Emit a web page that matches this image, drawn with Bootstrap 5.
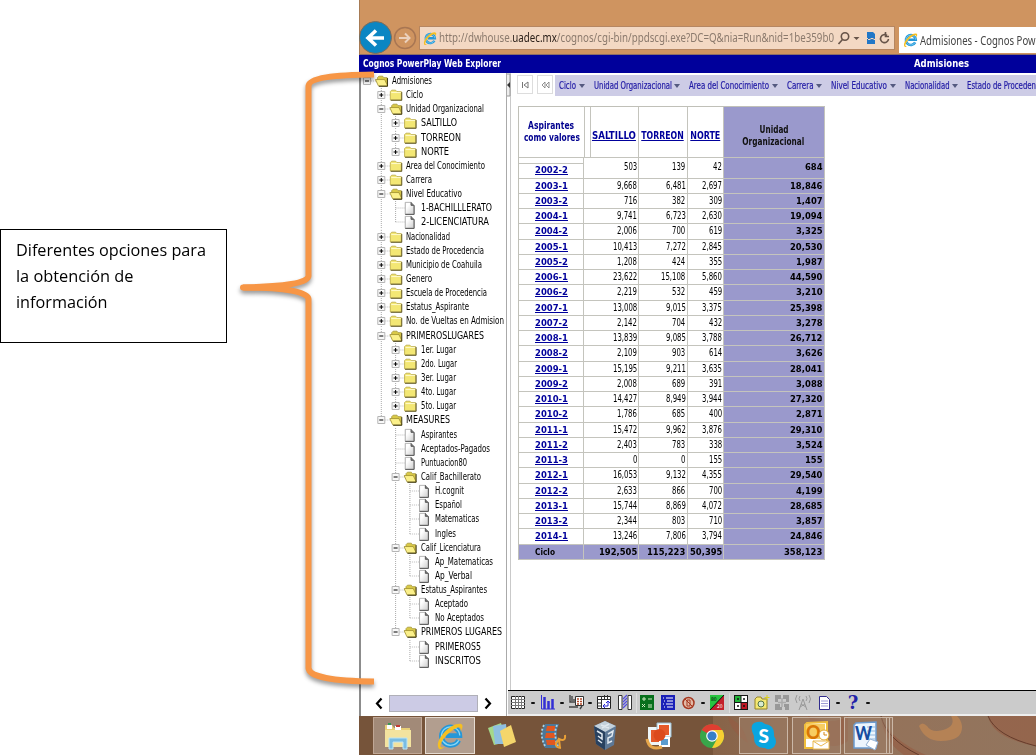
<!DOCTYPE html>
<html lang="es">
<head>
<meta charset="utf-8">
<title>Admisiones - Cognos PowerPlay Web Explorer</title>
<link href="https://cdn.jsdelivr.net/npm/bootstrap@5.3.0/dist/css/bootstrap.min.css" rel="stylesheet">
<style>
body{width:1036px;height:755px;overflow:hidden;background:#fff;font-family:"DejaVu Sans Condensed","DejaVu Sans",sans-serif;font-size:10px;line-height:14px;color:#111}
svg{display:block;overflow:visible}
.fit{display:inline-block;white-space:nowrap;transform-origin:0 50%;flex:none}
.notes{width:359px}
.callout-box{width:227px;height:114px;margin-top:229px;border:1px solid #000;padding:7px 0 0 15px;font:16px/26px "Open Sans","Noto Sans",sans-serif;color:#000}
.brace{left:235px;top:64px;pointer-events:none;z-index:5}
.win{width:677px;height:755px}
.chrome{height:55px;background:#cf9460;border-bottom:1px solid #8a6d68;font-family:"Noto Sans",sans-serif}
.addr{width:476px;height:24px;margin:26px 0 0 2px;background:#f3d8c3;border:1px solid #b68661;padding-left:3px;color:#8b7a6d;font-size:12px;line-height:22px}
.addr b{font-weight:400;color:#2b201a}
.urlclip{width:395px}
.tabx{width:137px;height:26px;margin:27px 0 0 4px;background:#fff;padding-left:4px;font-size:12px;line-height:27px;color:#444}
.brand{height:18px;background:#00009b;color:#fff;font-weight:700;font-size:10px;line-height:17px}
.side{width:149px;border-left:2px solid #8c8c8c;border-right:1px solid #aaa}
.tree{padding:1px 0 0 0;height:617px}
.trow{height:14.15px;line-height:14px;font-size:10px;color:#000}
.hscroll{height:27px}
.thumb{width:89px;height:17px;background:#cccbe5;border:1px solid #b0b0b8}
.split{width:4px;border-right:1px solid #c9c9c9}
.main{width:525px}
.dims{height:22px;margin-top:2px}
.nb{width:16px;height:19px;border:1px solid #ddd;color:#777}
.dimbar{height:21px;background:#cdcce6;color:#211ba5;font-size:10px;line-height:20px;margin-left:2px;padding-left:4px;-webkit-text-stroke:.2px #211ba5}
.dim::after{content:"";border:3px solid transparent;border-top:4px solid #555a80;border-bottom:0;margin:0 9.2px 0 2.5px}
.pivot{width:307px;margin:8.500px 0 0 6.500px;border-top:1px solid #c0c0b8;border-left:1px solid #c0c0b8}
.prow{display:grid;grid-template-columns:65px 55.5px 48.5px 36.5px 100.5px;height:15.25px}
.prow>div{border-right:1px solid #c4c4bd;border-bottom:1px solid #c4c4bd;display:flex;justify-content:flex-end;align-items:center;padding-right:1px;line-height:12px;overflow:hidden;font-size:10px;color:#000}
.prow>div:first-child{justify-content:center;padding:0 0 0 1px;font-family:"DejaVu Sans",sans-serif;font-weight:700;font-size:9.4px}
.prow>div:last-child,.prow.sum>div{background:#9a99cc;font-family:"DejaVu Sans",sans-serif;font-weight:700;font-size:9.4px}
.prow.hd{height:51px}
.prow.hd>div{justify-content:center;padding-top:8px;flex-direction:column;font-weight:700;font-size:9.6px;line-height:11.5px;color:#00008f;padding-right:0}
.prow.hd>div:first-child{padding-top:0;border-right:0}
.prow.hd>div:last-child{color:#111}
.prow.first{height:21px}
.prow.first>div{padding-bottom:1px}
.prow.first>div:first-child{padding-top:5px;padding-bottom:0;background:linear-gradient(#fff 5px,#c4c4bd 5px,#c4c4bd 6px,#fff 6px)}
.gapcell{border-left:1px solid #c4c4bd!important;box-shadow:inset 5px 0 #fff,inset 6px 0 #c4c4bd;padding-left:5px}
.lk{color:#00009b;text-decoration:underline}
.tools{height:26px;margin-left:-3px;width:529px;background:#cbcbcb;border-top:1px solid #000;border-bottom:2px solid #eee;display:grid;grid-template-columns:18px 11px 19px 10px 19px 7px 22px 20px 2px 20px 22px 19px 9px 20px 4px 20px 22px 18px 24px 18px 9px 22px 7px;padding-left:1px;align-items:center;justify-items:center}
.dd{width:4px;height:2px;background:#111;border-radius:1px}
.vs{width:1px;height:20px;background:#b2b2b2;border-right:1px solid #ddd}
.taskbar{height:39px;position:relative;background:#76543a;display:grid;grid-template-columns:49px 3px 50px 53px 51px 53px 54px 51px 2px 49px 4px 49px 3px 43px 3px 3px;padding-left:14px;align-items:center;justify-items:center}
.taskbar>*{position:relative}
.tk{width:100%;height:37px;border:1px solid #c0a795;background:#a28a78;display:flex;align-items:center;justify-content:center}
.tk.act{background:#b29e8f;border-color:#e6dcd2}
.tk.dim2{background:#9d806980;border-color:#cbb8a8}
.wall{position:absolute!important;left:354px;top:0}
.q{font:bold 18px/18px "DejaVu Serif",serif;color:#2222a8}
</style>
</head>
<body>
<svg width="0" height="0" class="position-absolute"><defs>
<symbol id="ie" viewBox="0 0 32 32"><path d="M26 21a10.500 10.500 0 1 1 1.200-5.500H11" fill="none" stroke="#2597d8" stroke-width="5.500"/><path d="M26 21a10.500 10.500 0 1 1 1.200-5.500" fill="none" stroke="#8ad7f5" stroke-width="1.500"/><path d="M3 30C-2 22 15 1 28 2c4 1 2 6 0 9 1-5-1-6-5-4C14 11 6 21 5 27c0 2 2 3 5 1-3 3-6 4-7 2z" fill="#f5bf22"/></symbol>
<linearGradient id="pg" x2="1" y2="1"><stop offset=".3" stop-color="#fff"/><stop offset="1" stop-color="#ccc"/></linearGradient>
<symbol id="fc" viewBox="0 0 14 12"><path d="M1 11V2.500L2.500 1h4L8 2.500h4.500V11z" fill="#f3e774" stroke="#b3a33c" stroke-width=".8"/><path d="M2 3.500h10" stroke="#fffbd0"/><path d="M13 3V11.500H1.500" stroke="#4f4610" fill="none" stroke-width=".9"/></symbol>
<symbol id="fo" viewBox="0 0 14 12"><path d="M2.500 8V2.500L4 1h4l1 1.500h3.500V11" fill="#d9c947" stroke="#a39436" stroke-width=".8"/><path d="M.5 4.500h9.500l3 6.500H3.500z" fill="#fbf08a" stroke="#9b8b2b" stroke-width=".8"/><path d="M13 3v8.500H4" stroke="#3b340a" fill="none"/></symbol>
<symbol id="dc" viewBox="0 0 12 14"><path d="M1.500.8h6L10.500 4v9.200h-9z" fill="url(#pg)" stroke="#aaa"/><path d="M7.500.8V4h3" fill="#777" stroke="#555"/><path d="M10.700 4v9.400H1.500" stroke="#555" fill="none"/></symbol>
</defs></svg>

<div class="d-flex position-relative">
  <aside class="notes">
    <div class="callout-box"><div><span class="fit" data-w="190">Diferentes opciones para</span></div><div><span class="fit" data-w="117.500">la obtención de</span></div><div><span class="fit" data-w="91.500">información</span></div></div>
  </aside>
  <svg class="brace position-absolute" width="145" height="630" fill="none" stroke="#f79646" stroke-width="6" style="filter:drop-shadow(0 3px 2px #0006)"><path d="M139 10.500C98 11 74 14 73.500 22V212C73 219 50 222.500 8 223.500 M8 223.500C50 223.500 73 228 73.500 235V604C74 613 98 617 139 617.500"/><path d="M8 223.500H50" stroke-linecap="round"/></svg>

  <div class="win d-flex flex-column">
    <header class="chrome d-flex">
      <svg width="58" height="54"><rect width="1" height="55" fill="#a77b55"/><circle cx="16.500" cy="37.500" r="16" fill="#0b86c3" stroke="#7d6b59"/><path d="M25 38H9.500m7.500-7.500L9 38l8 7.500" fill="none" stroke="#fff" stroke-width="3.600"/><circle cx="46" cy="38" r="10.500" fill="none" stroke="#a87653" stroke-width="1.500"/><path d="M40 38h10m-4-4.500 4.500 4.500-4.500 4.500" fill="none" stroke="#ebd1bd" stroke-width="2"/></svg>
      <div class="addr d-flex align-items-center"><svg width="14" height="15" style="margin-right:2px"><use href="#ie"/></svg><div class="urlclip overflow-hidden"><span class="fit" data-w="395">http://dwhouse.<b>uadec.mx</b>/cognos/cgi-bin/ppdscgi.exe?DC=Q&amp;nia=Run&amp;nid=1be359b0</span></div>
        <svg width="54" height="20" fill="none" stroke="#675449" stroke-width="1.600"><circle cx="11" cy="8.500" r="3.700"/><path d="M8.500 11.500 4.500 16"/><path d="M19.500 9h6l-3 3z" fill="#675449" stroke="none"/><path d="M33 4h6l2 2v4h-8zm0 8h8v4h-8z" fill="#2277c7" stroke="none"/><path d="M33 12l2-2 3 2 3-2" stroke="#1767b5" stroke-width="1"/><path d="M53 7.500A4 4 0 1 0 54.500 11M51.500 4v4.500H55"/></svg></div>
      <div class="tabx d-flex align-items-center overflow-hidden"><svg width="15" height="16" style="margin-right:2px"><use href="#ie"/></svg><span class="fit" data-w="115.500">Admisiones - Cognos Pow</span></div>
    </header>
    <div class="brand d-flex"><span style="width:555px;padding-left:4px"><span class="fit" data-w="138">Cognos PowerPlay Web Explorer</span></span><span class="fit" data-w="55">Admisiones</span></div>

    <div class="d-flex" style="height:643px">
      <div class="side"><div class="tree overflow-hidden" id="tree"></div>
        <div class="hscroll d-flex align-items-center"><svg width="28" height="17"><path d="M20.500 3.500 16 8.500l4.500 5" fill="none" stroke="#000" stroke-width="2.200"/></svg><div class="thumb"></div><svg width="20" height="17"><path d="M7.500 3.500 12 8.500l-4.500 5" fill="none" stroke="#000" stroke-width="2.200"/></svg></div></div>
      <div class="split"><svg width="4" height="25"><path d="M0 1h3v22H0" fill="#eee" stroke="#999"/><path d="M3 9v6L0 12z" fill="#333"/></svg></div>
      <main class="main d-flex flex-column">
        <div class="d-flex dims"><div class="nb me-1" style="margin-left:6px"><svg width="14" height="18"><path d="M4.500 6v6M10 6v6L6 9z" stroke="#777" fill="none"/></svg></div><div class="nb"><svg width="14" height="18"><path d="M7 6v6L4 9zm4 0v6L8 9z" stroke="#777" stroke-width=".8" fill="none"/></svg></div>
          <div class="dimbar d-flex align-items-center flex-grow-1 overflow-hidden" id="dims"></div></div>
        <div class="pivot" id="pivot"></div>
        <div class="tools mt-auto">
          <svg width="14" height="15"><path d="M.5 1.500h13v12H.5z" fill="#fff" stroke="#222"/><path d="M4.500 1v13m3-13v13m3-13v13M0 4.500h14M0 7.500h14M0 10.500h14" stroke="#777"/></svg><i class="dd"></i>
          <svg width="14" height="15"><path d="M.5 0v14H14" stroke="#332fd5" fill="none"/><path d="M3.500 2v12m4-8v8m4-10v10" stroke="#332fd5" stroke-width="2.500"/></svg><i class="dd"></i>
          <svg width="15" height="15"><path d="M6.500 1.500h8v9h-8z" fill="#fff" stroke="#333"/><path d="M8 4h5M8 6.500h5M8 9h5" stroke="#b34929" stroke-width="1.600" stroke-dasharray="2 1"/><path d="M1 0v7h6M3 1v5m2-2v2M0 12h9m2 2 2-3" stroke="#444" fill="none" stroke-width="1.400"/></svg><i class="dd"></i>
          <svg width="14" height="15"><path d="M.5 1.500h13v12H.5z" fill="#fff" stroke="#222"/><path d="M4.500 1v13M0 4.500h14M7.500 0v4M10.500 0v4M0 8h4M0 11h4" stroke="#333"/><path d="M6 11h5V6m-3 3-2 2 2 2M9 8l2-2 2 2" stroke="#2a2ad0" fill="none"/></svg>
          <svg width="14" height="15"><path d="M.5.5h3.500v14H.5zm9.500 0h3.500v14H10z" fill="#fff" stroke="#333"/><path d="M5 4l4-4M5 7l4-4M5 10l4-4M5 13l4-4" stroke="#534de0" stroke-width="1.200"/></svg><i class="vs"></i>
          <svg width="14" height="15"><path d="M0 0h14v15H0z" fill="#08701c"/><path d="M2 4h4M4 2v4m4-2h4M2 9l3 3m0-3-3 3m6-2h4m-4 2h4" stroke="#cfe9c0"/></svg>
          <svg width="14" height="15"><path d="M0 0h14v15H0z" fill="#1a20b8"/><path d="M2 3h1m2 0h7M3 6h1m2 0h6M2 9h1m2 0h7M3 12h1m2 0h6" stroke="#fff"/></svg>
          <svg width="13" height="14"><circle cx="6.500" cy="7" r="5.500" fill="#e3b9a5" stroke="#a53820" stroke-width="1.500"/><path d="M5 4h3v6H5zM3 3l8 8" fill="none" stroke="#a53820"/></svg><i class="dd"></i>
          <svg width="14" height="15"><path d="M0 0h14v15H0z" fill="#c3202b"/><path d="M0 0h14L0 15z" fill="#28c440"/><path d="M14 0 0 15" stroke="#111"/><text x="1" y="6" font-size="5">80</text><text x="7" y="13" font-size="5" fill="#fff">20</text></svg><i class="vs"></i>
          <svg width="14" height="15"><path d="M0 0h14v15H0z" fill="#161616"/><path d="M1 1h5.500v6H1z" fill="#20b337"/><path d="M7.500 1H13v6H7.500zM1 8h5.500v6H1z" fill="#fff"/><path d="M7.500 8H13v6H7.500z" fill="#bf1825"/><path d="M3 4h2m4 0h2M3 11h2m4 0h2" stroke="#111" stroke-width="1.500"/></svg>
          <svg width="16" height="16"><path d="M1 14V4l2-2h4l1 2h5v10z" fill="#f5e873" stroke="#958327"/><circle cx="7" cy="9" r="3" fill="#d8ebd2" stroke="#527347"/><path d="M13 0v5m-2.500-2.500h5" stroke="#ddd01b"/></svg>
          <svg width="16" height="15"><path d="M1 0h6v4H4v3H1zm8 0h6v7h-3V4H9zM1 9h5v3h2v3H1zm9 0h5v6h-4v-3h-1z" fill="#999"/><path d="M8 3v9M4 7.500h8" stroke="#aaa" stroke-width="1.500"/></svg>
          <svg width="16" height="16" fill="none" stroke="#999"><path d="M8 4 4 15M8 4l4 11M6 9l5 3M10 9l-5 3M5 1q-2 3 0 5M11 1q2 3 0 5M2 0Q-1 4 2 8M14 0q3 4 0 8"/></svg>
          <svg width="11" height="14"><path d="M.5.5h7l3 3v10H.5z" fill="#fff" stroke="#302b8d"/><path d="M2 5h7M2 7.500h7M2 10h7" stroke="#9c99d5"/></svg><i class="dd"></i><span class="q">?</span><i class="dd"></i>
        </div>
      </main>
    </div>

    <footer class="taskbar">
      <svg class="wall" width="323" height="39" style="overflow:hidden"><defs><linearGradient id="wg"><stop stop-color="#876348"/><stop offset=".4" stop-color="#957259"/><stop offset="1" stop-color="#92755e"/></linearGradient></defs><path d="M0 0h323v39H0z" fill="url(#wg)"/><path d="M15 0q2 15 20 27Q31 10 19 3M95 0q24 10 40 0v25q-14 10-28 0M168 0q9 24 45 39h-22Q170 25 168 0M275 0q4 22 48 30V0z" fill="#965b42" opacity=".6"/><path d="M168 0q5 23 38 39M275 0q8 20 48 30" stroke="#653c2b" fill="none"/><path d="M254 2q9 14-13 17-7 0-10-5-5-5-8 0 6 15 22 15 22 0 21-15-2-12-12-12z" transform="translate(-17 -4)" fill="#b58255"/></svg>
      <div class="tk"><svg width="27" height="30"><path d="M1 26V4h7l2 3h16v19z" fill="#e8cf77"/><path d="M3 4h5v4H3zm8 1h6v4h-6z" fill="#fff"/><path d="M4 3h3" stroke="#389a54" stroke-width="2"/><path d="M12 5h4" stroke="#c53a32" stroke-width="2"/><path d="M1 9h26v17H1z" fill="#f3e39f"/><path d="M5 28V17h18v11h-4v-7H9v7z" fill="#79bce2" stroke="#bde5f5"/></svg></div><i></i>
      <div class="tk act"><svg width="28" height="30"><use href="#ie"/></svg></div>
      <svg width="28" height="27"><path d="M0 6 13 1l6 19-13 3z" fill="#a5d88a"/><path d="M5 4 18 2l2 20H7z" fill="#8fbfe0"/><path d="m12 9 11-6 5 17-12 5z" fill="#f5d66b"/></svg>
      <svg width="27" height="28"><path d="M5 2h14q-5 9 1 24H5Q-2 13 5 2z" fill="#4d7797"/><path d="M7 4h8v5H6zm-1 7h9v5H5zm0 7h9l2 5H7z" fill="#e15720"/><path d="M4 3q-5 9 1 21M17 3q-4 9 1 21" stroke="#a9d4e8" stroke-width="1.800" stroke-dasharray="2" fill="none"/><path d="m20 26-1-9q7 3 6-4m-6 4q-7 8 2 9" stroke="#eaa136" stroke-width="2" fill="none"/></svg>
      <svg width="25" height="31"><path d="m12 1 11 5-2 19-9 5-9-6L1 6z" fill="#5d7896"/><path d="m12 1 11 5-11 6L1 6z" fill="#c3d0da"/><path d="m1 6 11 6v18L3 24z" fill="#28415f"/><path d="m4 11 5 3v5l-4-3m10-2 5-3-1 5-4 2v5l4-2M8 5l8 3m-7 0 7-4M5 20l4 3" stroke="#e0e8ef" stroke-width="1.500" fill="none"/></svg>
      <svg width="28" height="28"><path d="M3 5h17v18H3z" fill="#eef5f8"/><path d="M12 1h14v14H12z" fill="#f5f9fb" stroke="#9bc1d6"/><path d="M14 3h10v10H14zM6 8h10v12H6z" fill="#e5592a"/><path d="M14 15h11v10H14z" fill="#fff"/><path d="M16 17h7v6h-7z" fill="#5b9ccf"/><circle cx="14.500" cy="13" r="6" fill="#dc4a1d"/><path d="M2 17q2 12 15 8" stroke="#e6a64b" stroke-width="3" fill="none"/></svg>
      <svg width="26" height="28" viewBox="0 0 26 26"><circle cx="13" cy="13" r="12" fill="#39a64a"/><path d="M13 13 2.600 7A12 12 0 0 1 23.400 7z" fill="#df3e31"/><path d="M13 7h10.400A12 12 0 0 1 13 25l5-9z" fill="#f6cf32"/><circle cx="13" cy="13" r="5.800" fill="#fff"/><circle cx="13" cy="13" r="4.600" fill="#377fc7"/></svg><i></i>
      <div class="tk dim2"><svg width="26" height="30"><path d="M6 1q5-1 8 2 10 1 9 12 4 6 0 11-5 4-9 1Q2 27 3 15-3 3 6 1z" fill="#0aa5df"/><text x="7.500" y="22" font-family="Lato" font-weight="900" font-size="19" fill="#fff">S</text></svg></div><i></i>
      <div class="tk dim2"><svg width="28" height="30"><path d="m4 2 20-1v26H2V4z" fill="#fff" stroke="#efbd3c" stroke-width="2"/><path d="M3 3h19v15H3z" fill="#f8cd62"/><text x="3" y="18" font-family="Lato" font-weight="900" font-size="18" fill="#d97605">O</text><circle cx="21" cy="14" r="5" fill="#fff" stroke="#e2a82e"/><path d="M21 11v3h3" stroke="#d58817" fill="none"/><path d="M10 20h16v8H10z" fill="#fff" stroke="#eab950"/><path d="m10 20 8 5 8-5" stroke="#eab950" fill="none"/></svg></div><i></i>
      <div class="tk dim2"><svg width="27" height="30"><path d="m4 2 20-1v26H2V4z" fill="#edf5fd" stroke="#6c9cd0" stroke-width="1.500"/><path d="M15 6h8m-8 4h8m-8 4h8m-8 4h8" stroke="#93b7dd"/><text x="3" y="19" font-family="Lato" font-weight="900" font-size="18" fill="#174da0" textLength="17" lengthAdjust="spacingAndGlyphs">W</text><path d="m14 24 4-6 8 3-3 8z" fill="#fff" stroke="#94b2d5"/></svg></div>
      <div class="tk dim2 border-start-0"></div><div class="tk dim2 border-start-0"></div>
    </footer>
  </div>
</div>
<script src="https://cdn.jsdelivr.net/npm/bootstrap@5.3.0/dist/js/bootstrap.bundle.min.js"></script>
<script>
// level | kind (- open, + closed, . leaf) | label | label width
const nodes=`0|-|Admisiones|40
1|+|Ciclo|17
1|-|Unidad Organizacional|78
2|+|SALTILLO|36
2|+|TORREON|40
2|+|NORTE|28
1|+|Area del Conocimiento|79
1|+|Carrera|26
1|-|Nivel Educativo|56
2|.|1-BACHILLLERATO|71
2|.|2-LICENCIATURA|68
1|+|Nacionalidad|44
1|+|Estado de Procedencia|78
1|+|Municipio de Coahuila|76
1|+|Genero|26
1|+|Escuela de Procedencia|81
1|+|Estatus_Aspirante|63
1|+|No. de Vueltas en Admision|98
1|-|PRIMEROSLUGARES|78
2|+|1er. Lugar|35
2|+|2do. Lugar|36
2|+|3er. Lugar|35
2|+|4to. Lugar|35
2|+|5to. Lugar|35
1|-|MEASURES|44
2|.|Aspirantes|36
2|.|Aceptados-Pagados|69
2|.|Puntuacion80|46
2|-|Calif_Bachillerato|60
3|.|H.cognit|29
3|.|Español|27
3|.|Matematicas|44
3|.|Ingles|21
2|-|Calif_Licenciatura|60
3|.|Ap_Matematicas|58
3|.|Ap_Verbal|37
2|-|Estatus_Aspirantes|66
3|.|Aceptado|33
3|.|No Aceptados|49
2|-|PRIMEROS LUGARES|81
3|.|PRIMEROS5|46
3|.|INSCRITOS|46`.split('\n').map(r=>r.split('|'));
const X=k=>6+k*14.3;
tree.innerHTML=nodes.map(([lv,kind,label,w],i)=>{
  const L=+lv;let g='';
  for(let k=1;k<=L;k++){
    let more=false;
    for(let j=i+1;j<nodes.length&&+nodes[j][0]>=k;j++)if(+nodes[j][0]===k){more=true;break}
    if(more||k===L)g+=`<path d="M${X(k)} 0V${more?14.2:7}" stroke="#aaa" stroke-dasharray="1 1"/>`;
  }
  g+=`<path d="M${X(L)} 7h9" stroke="#bbb" stroke-dasharray="1 1"/>`;
  if(kind!=='.')g+=`<path d="M${X(L)-3.5} 3.500h7v7h-7z" fill="#f8f8f8" stroke="#b5b5b5"/><path d="M${X(L)-2} 7h4${kind==='+'?`M${X(L)} 5v4`:''}" stroke="#000"/>`;
  g+=kind==='.'?`<use href="#dc" x="${X(L)+8}" y=".5" width="12" height="13.500"/>`:`<use href="#${kind==='+'?'fc':'fo'}" x="${X(L)+8}" y="1" width="13.500" height="12"/>`;
  return `<div class="trow d-flex"><svg width="${X(L)+25}" height="14" class="flex-shrink-0">${g}</svg><span class="fit" data-w="${w}">${label}</span></div>`}).join('');

dims.innerHTML=[['Ciclo',17],['Unidad Organizacional',78],['Area del Conocimiento',80],['Carrera',26.5],['Nivel Educativo',56],['Nacionalidad',44.5],['Estado de Proceden',69]].map(([t,w])=>`<div class="dim d-flex align-items-center"><span class="fit" data-w="${w}">${t}</span></div>`).join('');

const data=`2002-2 503 139 42 684
2003-1 9,668 6,481 2,697 18,846
2003-2 716 382 309 1,407
2004-1 9,741 6,723 2,630 19,094
2004-2 2,006 700 619 3,325
2005-1 10,413 7,272 2,845 20,530
2005-2 1,208 424 355 1,987
2006-1 23,622 15,108 5,860 44,590
2006-2 2,219 532 459 3,210
2007-1 13,008 9,015 3,375 25,398
2007-2 2,142 704 432 3,278
2008-1 13,839 9,085 3,788 26,712
2008-2 2,109 903 614 3,626
2009-1 15,195 9,211 3,635 28,041
2009-2 2,008 689 391 3,088
2010-1 14,427 8,949 3,944 27,320
2010-2 1,786 685 400 2,871
2011-1 15,472 9,962 3,876 29,310
2011-2 2,403 783 338 3,524
2011-3 0 0 155 155
2012-1 16,053 9,132 4,355 29,540
2012-2 2,633 866 700 4,199
2013-1 15,744 8,869 4,072 28,685
2013-2 2,344 803 710 3,857
2014-1 13,246 7,806 3,794 24,846
Ciclo 192,505 115,223 50,395 358,123`.split('\n').map(r=>r.split(' '));
const numW=(s,d,c)=>[...s].reduce((a,ch)=>a+(ch===','?c:d),0);
const F=(t,w,c='')=>`<span class="fit ${c}" data-w="${w}">${t}</span>`;
pivot.innerHTML=`<div class="prow hd"><div>${F('Aspirantes',46)}${F('como valores',56)}</div><div class="gapcell">${F('SALTILLO',44,'lk')}</div><div>${F('TORREON',42.5,'lk')}</div><div>${F('NORTE',30,'lk')}</div><div>${F('Unidad',29)}${F('Organizacional',62)}</div></div>`+
data.map((r,i)=>{const sum=i===25;return `<div class="prow ${i?'':'first'} ${sum?'sum':''}">`+r.map((t,k)=>k===0?(sum?`<div><span style="margin-left:-13px">${F(t,20)}</span></div>`:`<div>${F(t,33,'lk')}</div>`):`<div>${F(t,(k===4||sum)?numW(t,5.85,3.2):numW(t,4.4,2.3))}</div>`).join('')+'</div>'}).join('');

// Squeeze each label to its own width
document.querySelectorAll('.fit').forEach(e=>{const n=e.getBoundingClientRect().width,w=+e.dataset.w;e.style.transform=`scaleX(${w/n})`;
  if(getComputedStyle(e.parentElement).flexDirection==='column'){e.style.transformOrigin='50% 50%';e.style.alignSelf='center'}
  else e.style.marginRight=(w-n)+'px'});
</script>
</body>
</html>
